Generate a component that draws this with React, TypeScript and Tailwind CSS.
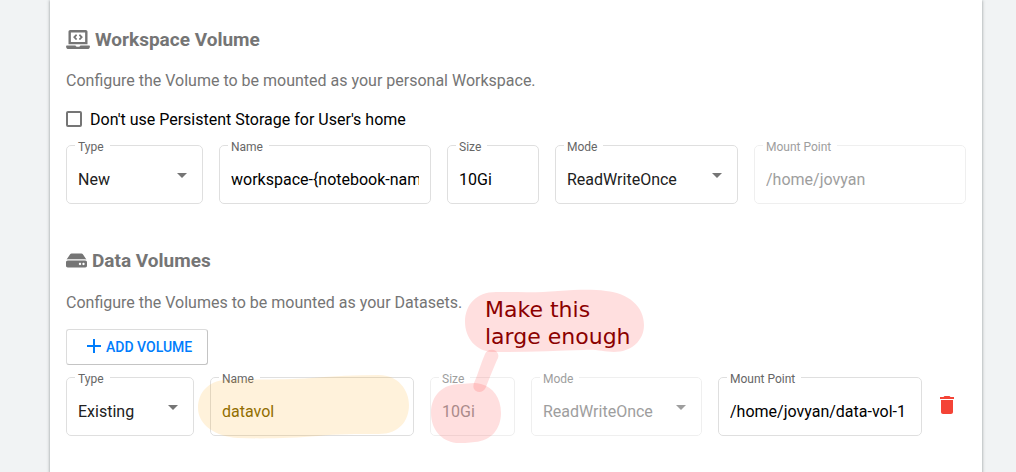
import { useState } from "react";
import type { ReactNode } from "react";
import { FaHdd, FaLaptopCode } from "react-icons/fa";
import { MdAdd, MdDelete } from "react-icons/md";

type FieldProps = {
  id: string;
  label: string;
  value: string;
  disabled?: boolean;
  tone?: string;
};

function Outline({ id, label, disabled, children }: { id: string; label: string; disabled?: boolean; children: ReactNode }) {
  return (
    <fieldset className={`relative min-w-0 rounded-[5px] border ${disabled ? "border-[#efefef]" : "border-[#dfdfdf]"}`}>
      <legend className={`ml-2 pt-1 pr-1.5 pl-[3px] text-xs leading-3 ${disabled ? "text-[#9e9e9e]" : "text-[#666666]"}`}>
        <label htmlFor={id} className="block whitespace-nowrap">{label}</label>
      </legend>
      {children}
    </fieldset>
  );
}

function TextField({ id, label, value, disabled, tone = "text-black" }: FieldProps) {
  const [text, setText] = useState(value);
  return (
    <Outline id={id} label={label} disabled={disabled}>
      <input
        id={id}
        type="text"
        value={text}
        disabled={disabled}
        onChange={(e) => setText(e.target.value)}
        className={`block h-[50px] w-full bg-transparent px-[11px] pt-0.5 text-base outline-none ${disabled ? "text-[#9e9e9e]" : tone}`}
      />
    </Outline>
  );
}

function SelectField({ id, label, value, disabled, options }: FieldProps & { options: string[] }) {
  const [choice, setChoice] = useState(value);
  return (
    <Outline id={id} label={label} disabled={disabled}>
      <select
        id={id}
        value={choice}
        disabled={disabled}
        onChange={(e) => setChoice(e.target.value)}
        className={`block h-[50px] w-full appearance-none bg-transparent pt-1 pr-7 pl-[11px] text-base opacity-100 outline-none ${disabled ? "text-[#9e9e9e]" : "text-[#212121]"}`}
      >
        {options.map((o) => (
          <option key={o}>{o}</option>
        ))}
      </select>
      <svg
        aria-hidden="true"
        viewBox="0 0 10 5"
        className={`pointer-events-none absolute right-[15px] bottom-[25px] h-[5px] w-[10px] ${disabled ? "fill-[#9e9e9e]" : "fill-[#757575]"}`}
      >
        <path d="M0 0h10L5 5z" />
      </svg>
    </Outline>
  );
}

function Annotation() {
  return (
    <div className="pointer-events-none absolute bottom-[-12px] left-[132px] h-[168px] w-[450px]">
      <svg aria-hidden="true" viewBox="198 280 450 168" className="block h-full w-full">
        <path
          fill="#ffa500"
          fillOpacity="0.14"
          d="M198 408C198 392 209 381 225 380C255 379 287 380 311 378C333 376 357 375 379 375C398 375 409 390 409 405C409 421 399 434 379 434C356 434 338 434 318 436C294 438 265 439 238 438C216 437 198 425 198 408Z"
        />
        <g fill="#ff0000" fillOpacity="0.125">
          <path d="M465 322C465 305 476 292 496 292C517 292 538 293 558 291C577 290 590 289 606 291C628 293 644 306 644 325C644 341 631 352 614 352C603 352 597 349 584 350C555 351 525 352 492 352C476 351 465 338 465 322Z" />
          <path d="M431 413C431 395 443 384 460 384C468 384 474 382 481 384C493 387 501 398 501 413C501 429 491 441 475 442C469 443 462 443 456 443C441 441 431 429 431 413Z" />
          <path d="M485 354C487 349 493 349 496 351C499 354 499 357 497 360C493 369 489 379 486 387C484 392 479 393 476 391C473 389 473 386 474 383C478 374 481 363 485 354Z" />
        </g>
      </svg>
      <p className="absolute top-4 left-[287px] font-['DejaVu_Sans',sans-serif] text-[22px] leading-[27px] whitespace-nowrap text-[#8b0000]">
        Make this
        <br />
        large enough
      </p>
    </div>
  );
}

function Heading({ icon, children }: { icon: ReactNode; children: ReactNode }) {
  return (
    <h2 className="flex h-6 items-center gap-[5px] text-[19px] font-bold text-[#757575]">
      {icon}
      {children}
    </h2>
  );
}

const modes = ["ReadWriteOnce", "ReadOnlyMany", "ReadWriteMany"];

export default function App() {
  const [noStorage, setNoStorage] = useState(false);
  return (
    <div className="flow-root min-h-screen bg-[#f1f3f4] pr-[34px] pl-[50px] font-[Roboto,sans-serif]">
      <main className="min-h-screen bg-white px-4 pt-7 pb-9 shadow-[0_1px_3px_1px_rgba(60,64,67,0.2),0_1px_2px_rgba(60,64,67,0.3)]">
        <section>
          <Heading icon={<FaLaptopCode className="mb-0.5 h-[19px] w-6" />}>Workspace Volume</Heading>
          <p className="mt-[17px] text-base text-[#757575]">Configure the Volume to be mounted as your personal Workspace.</p>
          <div className="mt-3.5 flex h-6 items-center gap-2">
            <input
              id="no-storage"
              type="checkbox"
              checked={noStorage}
              onChange={(e) => setNoStorage(e.target.checked)}
              className="h-4 w-4 appearance-none rounded-xs border-2 border-[#757575] checked:bg-[#007dfc]"
            />
            <label htmlFor="no-storage" className="pt-0.5 text-base text-black">Don't use Persistent Storage for User's home</label>
          </div>
          <div className="mt-1.5 grid grid-cols-[137fr_212fr_92fr_183fr_212fr] gap-4">
            <SelectField id="ws-type" label="Type" value="New" options={["New", "Existing"]} />
            <TextField id="ws-name" label="Name" value="workspace-{notebook-name}" />
            <TextField id="ws-size" label="Size" value="10Gi" />
            <SelectField id="ws-mode" label="Mode" value="ReadWriteOnce" options={modes} />
            <TextField id="ws-mount" label="Mount Point" value="/home/jovyan" disabled />
          </div>
        </section>

        <section className="relative mt-[45px]">
          <Heading icon={<FaHdd className="mb-0.5 h-[19px] w-[21px]" />}>Data Volumes</Heading>
          <p className="mt-[18px] text-base text-[#757575]">Configure the Volumes to be mounted as your Datasets.</p>
          <button
            type="button"
            className="mt-3.5 flex h-9 items-center rounded-[3px] border border-[#dcdcdc] border-r-[#c4c4c4] border-b-[#c4c4c4] px-[15px] text-sm font-medium text-[#007dfc]"
          >
            <MdAdd className="mb-0.5 h-6 w-6" />
            ADD VOLUME
          </button>
          <div className="mt-1 flex items-center">
            <div className="grid flex-1 grid-cols-[128fr_204fr_85fr_171fr_204fr] gap-4">
              <SelectField id="dv-type" label="Type" value="Existing" options={["New", "Existing"]} />
              <TextField id="dv-name" label="Name" value="datavol" tone="text-[#806600]" />
              <TextField id="dv-size" label="Size" value="10Gi" disabled />
              <SelectField id="dv-mode" label="Mode" value="ReadWriteOnce" options={modes} disabled />
              <TextField id="dv-mount" label="Mount Point" value="/home/jovyan/data-vol-1" />
            </div>
            <button type="button" aria-label="Delete volume" className="mt-1 ml-1.5 flex h-10 w-[38px] items-center justify-center text-[#f44336]">
              <MdDelete className="h-6 w-6" />
            </button>
          </div>
          <Annotation />
        </section>
      </main>
    </div>
  );
}
